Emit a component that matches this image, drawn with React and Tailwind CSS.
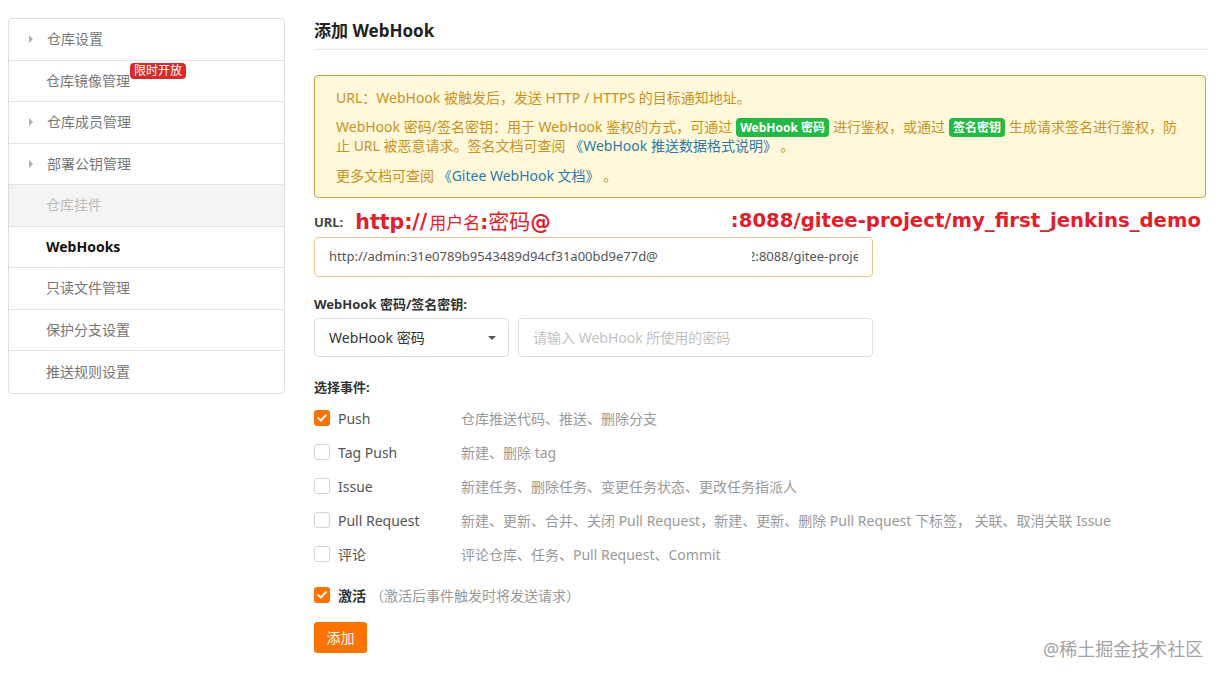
import React from 'react'

const sideItems = [
  { label: '仓库设置', arrow: true },
  { label: '仓库镜像管理', badge: '限时开放' },
  { label: '仓库成员管理', arrow: true },
  { label: '部署公钥管理', arrow: true },
  { label: '仓库挂件', disabled: true },
  { label: 'WebHooks', active: true },
  { label: '只读文件管理' },
  { label: '保护分支设置' },
  { label: '推送规则设置' },
]

const events = [
  { label: 'Push', desc: '仓库推送代码、推送、删除分支', checked: true },
  { label: 'Tag Push', desc: '新建、删除 tag' },
  { label: 'Issue', desc: '新建任务、删除任务、变更任务状态、更改任务指派人' },
  { label: 'Pull Request', desc: '新建、更新、合并、关闭 Pull Request，新建、更新、删除 Pull Request 下标签， 关联、取消关联 Issue' },
  { label: '评论', desc: '评论仓库、任务、Pull Request、Commit' },
]

const Checkbox = ({ checked }) => (
  checked ? (
    <span className="flex h-4 w-4 shrink-0 items-center justify-center rounded-[3px] bg-[#fe7300]">
      <svg width="10" height="8" viewBox="0 0 10 8" fill="none">
        <path d="M1.2 4.1 L3.8 6.5 L8.8 1.3" stroke="#fff" strokeWidth="1.9" strokeLinecap="round" strokeLinejoin="round" />
      </svg>
    </span>
  ) : (
    <span className="h-4 w-4 shrink-0 rounded-[3px] border border-[#d4d4d5] bg-white" />
  )
)

const Sidebar = () => (
  <div className="w-[277px] shrink-0 self-start overflow-hidden rounded-[4px] border border-[#dedede] bg-white">
    {sideItems.map((item, i) => (
      <div
        key={item.label}
        className={`flex h-[41.5px] items-center pl-[20px] text-[14px] leading-[18px] ${i < sideItems.length - 1 ? 'border-b border-[#e4e4e4]' : ''} ${item.disabled ? 'bg-[#f4f4f4] text-[#bdbdbd]' : item.active ? 'font-bold text-[#111]' : 'text-[#777]'}`}
      >
        <span className="flex w-[17px] shrink-0 items-center">
          {item.arrow && <span className="h-0 w-0 border-y-[4px] border-l-[4px] border-y-transparent border-l-[#b0b0b0]" />}
        </span>
        <span className={`relative ${item.arrow ? 'ml-[1px]' : ''}`}>
          {item.label}
          {item.badge && (
            <span className="absolute left-[100%] top-[-9px] whitespace-nowrap rounded-[4px] bg-[#db2828] px-[4px] text-[12px] leading-[16px] text-white">
              {item.badge}
            </span>
          )}
        </span>
      </div>
    ))}
  </div>
)

const Tag = ({ children }) => (
  <span className="mx-[4px] rounded-[4px] bg-[#21ba45] px-[4px] py-[1px] text-[12px] font-bold text-white">{children}</span>
)

const Link = ({ children }) => <span className="text-[#2f7aa6]">{children}</span>

export default function App() {
  return (
    <div className="relative flex min-h-[680px] bg-white pl-[8px] pt-[18px] font-['Noto_Sans','Noto_Sans_CJK_SC',sans-serif]">
      <Sidebar />

      <div className="ml-[29px] w-[894px]">
        <h2 className="border-b border-[#e5e5e5] pb-[6px] pt-[1px] text-[17px] font-bold leading-[24px] text-[#222]">添加 WebHook</h2>

        <div className="mt-[25px] w-[892px] rounded-[4px] border border-[#c9a13c] bg-[#fff8db] px-[21px] pb-[12px] pt-[13px] text-[14px] leading-[18px] text-[#c8931e]">
          <p>URL：WebHook 被触发后，发送 HTTP / HTTPS 的目标通知地址。</p>
          <p className="mt-[11px]">
            WebHook 密码/签名密钥：用于 WebHook 鉴权的方式，可通过<Tag>WebHook 密码</Tag>进行鉴权，或通过<Tag>签名密钥</Tag>生成请求签名进行鉴权，防
            <br />
            止 URL 被恶意请求。签名文档可查阅 <Link>《WebHook 推送数据格式说明》</Link> 。
          </p>
          <p className="mt-[12px]">
            更多文档可查阅 <Link>《Gitee WebHook 文档》</Link> 。
          </p>
        </div>

        <div className="mt-[8px] flex h-[30px] items-center whitespace-nowrap">
          <span className="pt-[3px] text-[13px] font-bold text-[#40464d]">URL:</span>
          <span className="ml-[12px] flex items-baseline text-[#e0202b]">
            <span className="font-['DejaVu_Sans',sans-serif] text-[20.5px] font-bold">http://</span>
            <span className="ml-[2px] font-['Noto_Sans_CJK_SC',sans-serif] text-[17px]">用户名</span>
            <span className="font-['DejaVu_Sans',sans-serif] text-[20px] font-bold">:</span>
            <span className="font-['Noto_Sans_CJK_SC',sans-serif] text-[21px]">密码</span>
            <span className="font-['DejaVu_Sans',sans-serif] text-[20.5px] font-bold">@</span>
          </span>
          <span className="ml-auto mr-[7px] font-['DejaVu_Sans',sans-serif] text-[19.7px] font-bold text-[#e0202b]">:8088/gitee-project/my_first_jenkins_demo</span>
        </div>

        <div className="mt-[1px] flex h-[40px] w-[559px] items-center rounded-[4px] border border-[#f1c48e] bg-white pl-[14px] text-[13px] text-[#555]">
          <span className="w-[423px] overflow-hidden whitespace-nowrap">http://admin:31e0789b9543489d94cf31a00bd9e77d@</span>
          <span className="w-[106px] overflow-hidden whitespace-nowrap">
            <span className="-ml-[4px]">2:8088/gitee-proje</span>
          </span>
        </div>

        <div className="mt-[18px] text-[13px] font-bold leading-[18px] text-[#333]">WebHook 密码/签名密钥:</div>

        <div className="mt-[5px] flex gap-[9px]">
          <div className="flex h-[39px] w-[195px] items-center justify-between rounded-[4px] border border-[#dedede] pl-[14px] pr-[12px] text-[14px] text-[#333]">
            <span>WebHook 密码</span>
            <span className="h-0 w-0 border-x-[4px] border-t-[4px] border-x-transparent border-t-[#555]" />
          </div>
          <div className="flex h-[39px] w-[355px] items-center rounded-[4px] border border-[#dedede] pl-[14px] text-[14px] text-[#c2c2c2]">
            请输入 WebHook 所使用的密码
          </div>
        </div>

        <div className="mt-[21px] text-[13px] font-bold leading-[18px] text-[#333]">选择事件:</div>

        <div className="mt-[5px]">
          {events.map((ev) => (
            <div key={ev.label} className="flex h-[34px] items-center text-[14px]">
              <Checkbox checked={ev.checked} />
              <span className="ml-[8px] w-[123px] text-[#555]">{ev.label}</span>
              <span className="whitespace-nowrap text-[#9a9a9a]">{ev.desc}</span>
            </div>
          ))}
        </div>

        <div className="mt-[7px] flex h-[34px] items-center text-[14px]">
          <Checkbox checked />
          <span className="ml-[8px] font-bold text-[#333]">激活</span>
          <span className="ml-[4px] text-[#999]">（激活后事件触发时将发送请求）</span>
        </div>

        <button className="mt-[10px] h-[31px] w-[53px] rounded-[3px] bg-[#fe7300] text-[14px] text-white">添加</button>
      </div>

      <div className="absolute left-[1043px] top-[638px] text-[18px] leading-[22px] text-[#a3a3a3]">@稀土掘金技术社区</div>
    </div>
  )
}
